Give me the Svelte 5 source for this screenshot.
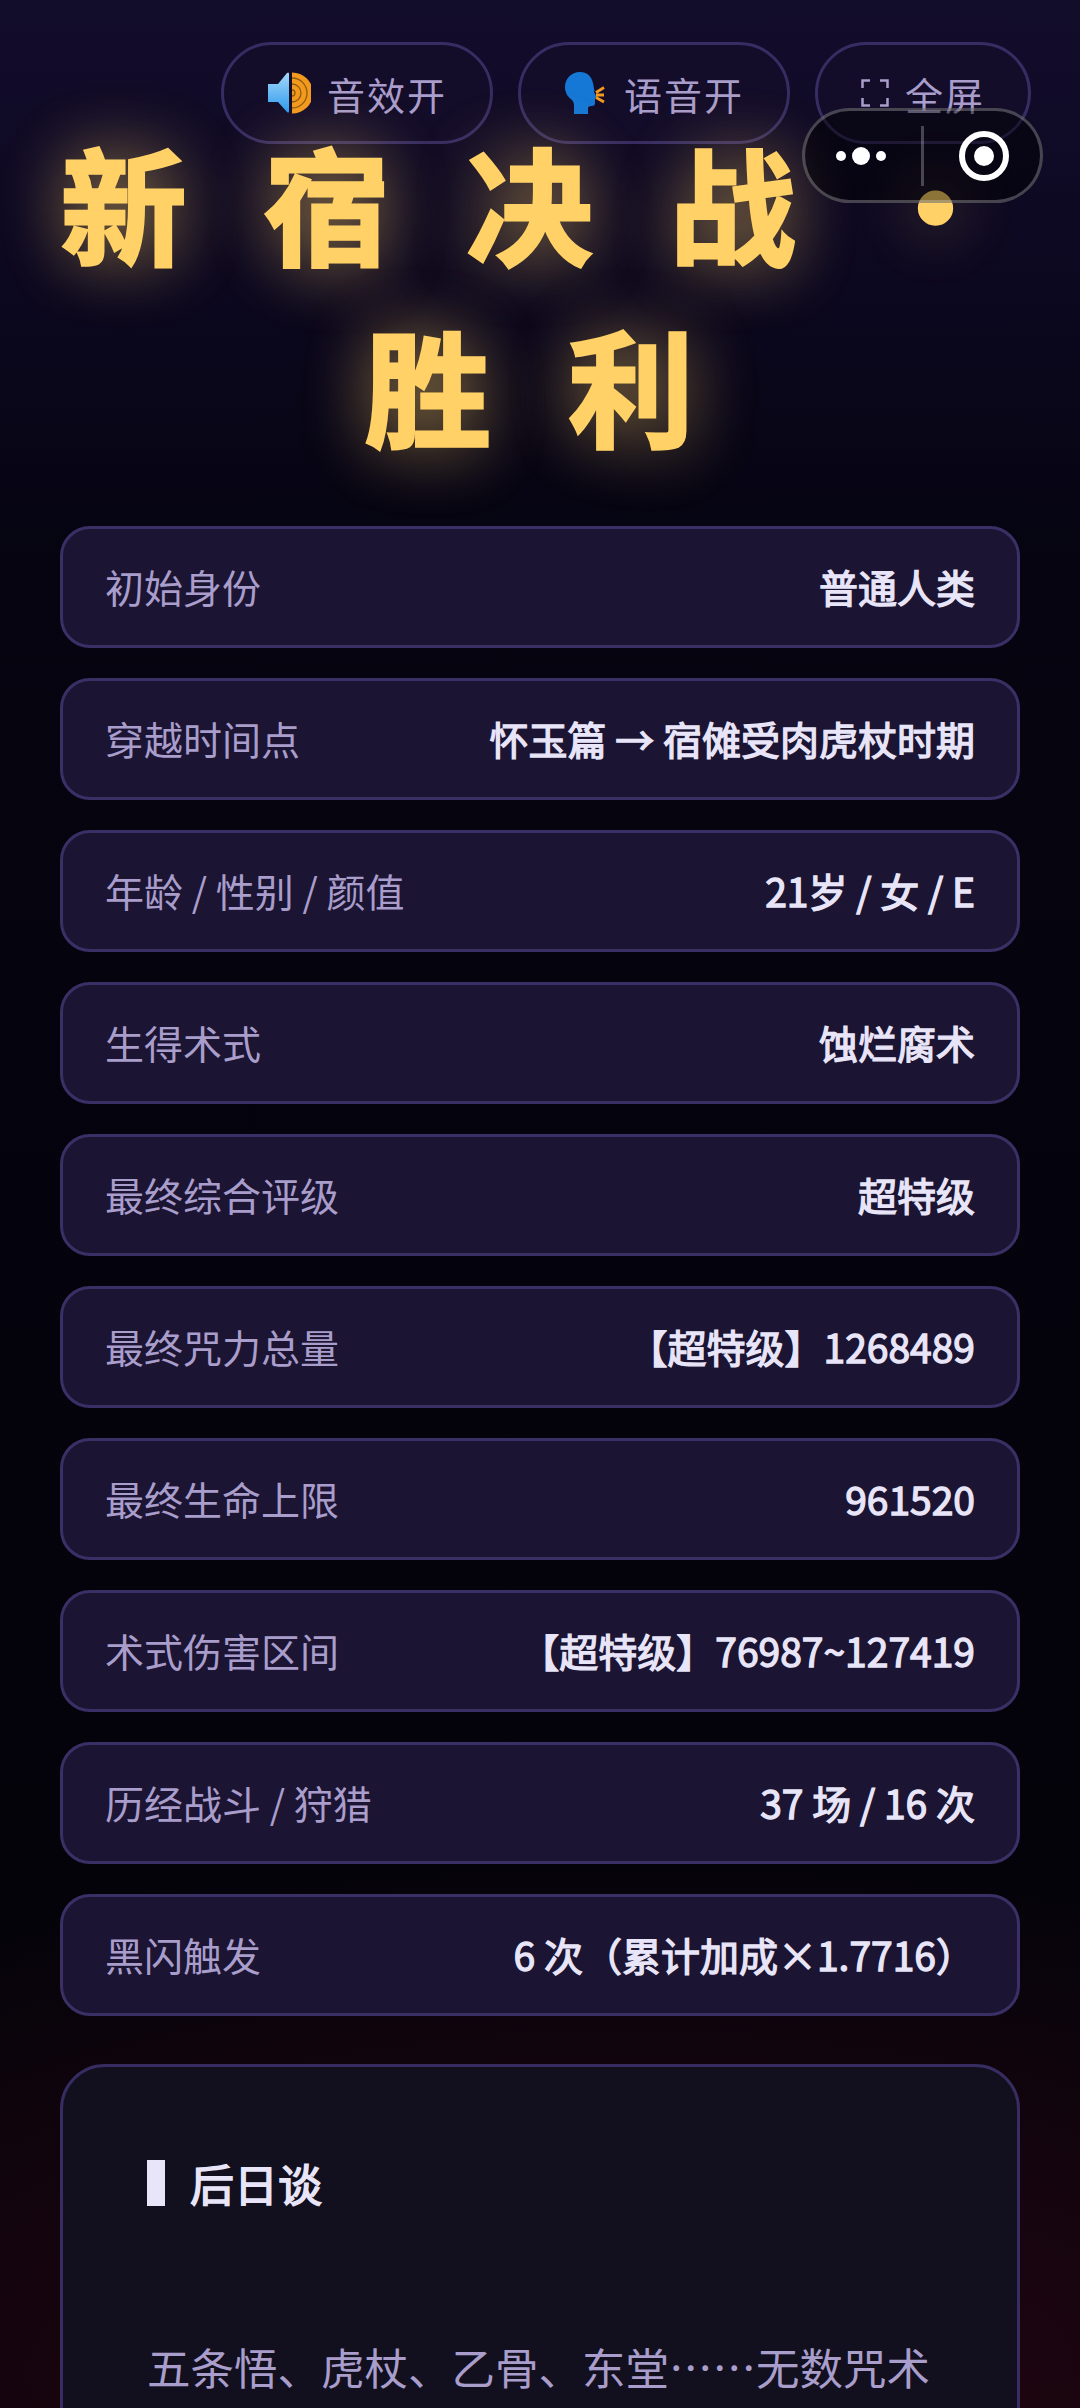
<script>
	const stats = [
		{ label: '初始身份', value: '普通人类' },
		{ label: '穿越时间点', value: '怀玉篇 → 宿傩受肉虎杖时期' },
		{ label: '年龄 / 性别 / 颜值', value: '21岁 / 女 / E' },
		{ label: '生得术式', value: '蚀烂腐术' },
		{ label: '最终综合评级', value: '超特级' },
		{ label: '最终咒力总量', value: '【超特级】1268489' },
		{ label: '最终生命上限', value: '961520' },
		{ label: '术式伤害区间', value: '【超特级】76987~127419' },
		{ label: '历经战斗 / 狩猎', value: '37 场 / 16 次' },
		{ label: '黑闪触发', value: '6 次（累计加成×1.7716）' }
	];
</script>

<div class="page">
	<div class="controls">
		<button class="ctrl">
			<svg class="icon" viewBox="0 0 44 44" aria-hidden="true">
				<defs>
					<linearGradient id="spk" x1="0" y1="0" x2="0" y2="1">
						<stop offset="0" stop-color="#a6d8fb" />
						<stop offset="1" stop-color="#2b9bf0" />
					</linearGradient>
				</defs>
				<path d="M1 13h10L20 2q2-1.500 2 1v37q0 2.500-2 1L11 31H1z" fill="url(#spk)" />
				<path d="M25 1.500a21 20.500 0 0 1 0 41z" fill="#f39a1e" />
				<path d="M25 7a15 15 0 0 1 0 30M25 13a9 9 0 0 1 0 18M25 19a3 3 0 0 1 0 6" fill="none" stroke="#8a5a12" stroke-width="1.300" />
			</svg>
			<span>音效开</span>
		</button>
		<button class="ctrl">
			<svg class="icon" viewBox="0 0 44 44" aria-hidden="true">
				<path d="M16 1C7 1 1 8 1 16c0 6 3 10 7 13 2 2 2 5 2 7v7h14v-6c0-1 1-2 3-2h1c2 0 3-1 3-3v-5c1 0 2-1 1-2l-2-4c0-1 1-1 0-3C29 6 24 1 16 1z" fill="#1578d6" />
				<path d="M32 21.500l8-5M32 24h8M32 26.500l8 4.500" stroke="#f39a1e" stroke-width="2.800" fill="none" />
			</svg>
			<span>语音开</span>
		</button>
		<button class="ctrl">
			<svg class="icon small" viewBox="0 0 28 28" aria-hidden="true">
				<path d="M9 1.500H1.500V9M19 1.500h7.500V9M9 26.500H1.500V19M19 26.500h7.500V19" fill="none" stroke="currentColor" stroke-width="2.500" />
			</svg>
			<span>全屏</span>
		</button>
	</div>

	<h1 class="title">新宿决战·<br />胜利</h1>

	<div class="stats">
		{#each stats as row}
			<div class="row">
				<span class="label">{row.label}</span>
				<span class="value">{row.value}</span>
			</div>
		{/each}
	</div>

	<section class="epilogue">
		<h2>后日谈</h2>
		<p>五条悟、虎杖、乙骨、东堂……无数咒术</p>
	</section>

	<!-- mini program capsule floats over the page -->
	<div class="capsule">
		<div class="dots"><i></i><i class="big"></i><i></i></div>
		<div class="divider"></div>
		<div class="target"><i></i></div>
	</div>
</div>

<style>
	:global(html),
	:global(body) {
		margin: 0;
		height: 2408px;
		overflow: hidden;
		background: #040308;
	}

	.page {
		position: relative;
		box-sizing: border-box;
		width: 1080px;
		height: 2408px;
		overflow: hidden;
		padding: 42px 60px 0;
		font-family: 'Noto Sans CJK SC', 'Noto Sans', sans-serif;
		background:
			radial-gradient(ellipse 1300px 560px at 58% 100%, rgba(110, 12, 40, 0.32), rgba(110, 12, 40, 0) 100%),
			linear-gradient(180deg, #130d2c 0, #0c0820 280px, #050410 560px, #040308 100%);
	}

	.controls {
		display: flex;
		justify-content: flex-end;
		gap: 25px;
		margin-right: -11px;
	}

	.ctrl {
		display: flex;
		align-items: center;
		justify-content: center;
		gap: 16px;
		box-sizing: border-box;
		height: 102px;
		padding: 0 43px;
		background: #130d2a;
		border: 3px solid #372d63;
		border-radius: 51px;
		color: #a99dcb;
		font-family: inherit;
		font-size: 38px;
		letter-spacing: 2px;
	}

	.icon {
		width: 44px;
		height: 44px;
		flex: none;
	}

	.icon.small {
		width: 28px;
		height: 28px;
	}

	.title {
		margin: -34px -60px 0;
		padding-left: 56px;
		font-size: 126px;
		line-height: 182px;
		font-weight: 700;
		-webkit-text-stroke: 3px #ffd166;
		letter-spacing: 77px;
		text-align: center;
		color: #ffd166;
		text-shadow:
			0 0 70px rgba(255, 209, 102, 0.45),
			0 0 70px rgba(255, 209, 102, 0.25);
		white-space: nowrap;
	}

	.stats {
		display: flex;
		flex-direction: column;
		gap: 30px;
		margin-top: 52px;
	}

	.row {
		display: flex;
		justify-content: space-between;
		align-items: center;
		box-sizing: border-box;
		height: 122px;
		padding: 0 42px 3px;
		background: #1b1533;
		border: 3px solid #3a3066;
		border-radius: 30px;
		font-size: 39px;
	}

	.label {
		color: #a99dcb;
	}

	.value {
		color: #e9e5f8;
		font-weight: 400;
		-webkit-text-stroke: 1.300px #e9e5f8;
	}

	.epilogue {
		box-sizing: border-box;
		height: 600px;
		margin-top: 48px;
		padding: 93px 84px;
		background: #12101f;
		border: 3px solid #372d63;
		border-radius: 45px;
	}

	h2 {
		margin: 0;
		padding-left: 25px;
		border-left: 18px solid #e9e5f8;
		height: 46px;
		font-size: 44px;
		line-height: 46px;
		font-weight: 400;
		-webkit-text-stroke: 1.500px #e9e5f8;
		color: #e9e5f8;
	}

	p {
		margin: 121px 0 0;
		font-size: 43.500px;
		line-height: 80px;
		color: #a99dcb;
		white-space: nowrap;
	}

	.capsule {
		position: absolute;
		left: 802px;
		top: 108px;
		display: flex;
		align-items: center;
		box-sizing: border-box;
		width: 241px;
		height: 95px;
		background: rgba(0, 0, 0, 0.45);
		border: 3px solid rgba(255, 255, 255, 0.25);
		border-radius: 48px;
	}

	.dots {
		display: flex;
		align-items: center;
		justify-content: center;
		gap: 6px;
		width: 112px;
		margin-right: 4px;
	}

	.dots i {
		width: 10px;
		height: 10px;
		border-radius: 50%;
		background: #fff;
	}

	.dots i.big {
		width: 18px;
		height: 18px;
	}

	.divider {
		width: 3px;
		height: 60px;
		background: rgba(255, 255, 255, 0.25);
	}

	.target {
		display: flex;
		align-items: center;
		justify-content: center;
		box-sizing: border-box;
		width: 50px;
		height: 50px;
		margin-left: 35px;
		border: 6px solid #fff;
		border-radius: 50%;
	}

	.target i {
		width: 20px;
		height: 20px;
		border-radius: 50%;
		background: #fff;
	}
</style>
